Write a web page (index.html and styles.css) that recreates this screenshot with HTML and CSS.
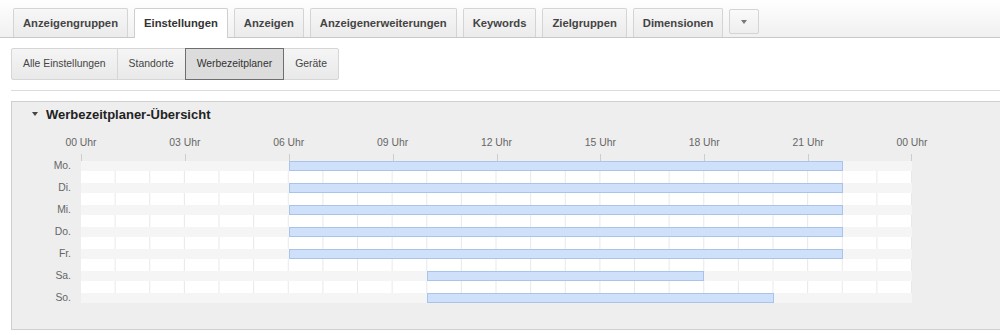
FILE: index.html
```html
<!DOCTYPE html>
<html lang="de">

<head>
  <meta charset="utf-8">
  <title>Werbezeitplaner</title>
  <link rel="stylesheet" href="styles.css">
</head>

<body>
  <div class="tabbar">
    <div class="tab">Anzeigengruppen</div>
    <div class="tab active">Einstellungen</div>
    <div class="tab">Anzeigen</div>
    <div class="tab">Anzeigenerweiterungen</div>
    <div class="tab">Keywords</div>
    <div class="tab">Zielgruppen</div>
    <div class="tab">Dimensionen</div>
    <div class="tab-more"><span class="caret"></span></div>
  </div>

  <div class="subtabs">
    <div class="subtab">Alle Einstellungen</div>
    <div class="subtab">Standorte</div>
    <div class="subtab active">Werbezeitplaner</div>
    <div class="subtab">Geräte</div>
  </div>

  <div class="divider"></div>

  <div class="panel">
    <div class="panel-title"><span class="toggle"></span>Werbezeitplaner-Übersicht</div>

    <div class="axis">
      <span>00 Uhr</span><span>03 Uhr</span><span>06 Uhr</span><span>09 Uhr</span><span>12 Uhr</span>
      <span>15 Uhr</span><span>18 Uhr</span><span>21 Uhr</span><span>00 Uhr</span>
    </div>
    <div class="ticks">
      <span></span><span></span><span></span><span></span><span></span><span></span><span></span><span></span>
    </div>

    <div class="schedule">
      <span class="day-label">Mo.</span>
      <div class="track"><div class="slot" style="left:25%;width:66.667%"></div></div>
      <div class="band"></div>

      <span class="day-label">Di.</span>
      <div class="track"><div class="slot" style="left:25%;width:66.667%"></div></div>
      <div class="band"></div>

      <span class="day-label">Mi.</span>
      <div class="track"><div class="slot" style="left:25%;width:66.667%"></div></div>
      <div class="band"></div>

      <span class="day-label">Do.</span>
      <div class="track"><div class="slot" style="left:25%;width:66.667%"></div></div>
      <div class="band"></div>

      <span class="day-label">Fr.</span>
      <div class="track"><div class="slot" style="left:25%;width:66.667%"></div></div>
      <div class="band"></div>

      <span class="day-label">Sa.</span>
      <div class="track"><div class="slot" style="left:41.667%;width:33.333%"></div></div>
      <div class="band"></div>

      <span class="day-label">So.</span>
      <div class="track"><div class="slot" style="left:41.667%;width:41.667%"></div></div>
    </div>
  </div>
</body>

</html>
```

FILE: styles.css
```css
body {
  font-family: 'Liberation Sans', Arial, sans-serif;
  background-color: #fff;
  margin: 0;
  overflow: hidden;
  color: #444;
}

/* top tabs */
.tabbar {
  display: flex;
  align-items: flex-start;
  gap: 6px;
  height: 37px;
  padding-left: 13px;
  border-bottom: 1px solid #c8c8c8;
  background: linear-gradient(#fff, #f0f0f0);
  box-sizing: content-box;
}

.tab {
  margin-top: 8px;
  height: 28px;
  padding: 0 9px;
  line-height: 28px;
  font-size: 11.25px;
  font-weight: bold;
  color: #444;
  background: linear-gradient(#f7f7f7, #ebebeb);
  border: 1px solid #d4d4d4;
  border-bottom: none;
  border-radius: 2px 2px 0 0;
  white-space: nowrap;
}

.tab.active {
  height: 29px;
  background: #fff;
  border-color: #cfcfcf;
  color: #333;
}

.tab-more {
  margin-top: 9px;
  width: 28px;
  height: 23px;
  display: flex;
  align-items: center;
  justify-content: center;
  border: 1px solid #d4d4d4;
  border-radius: 2px;
  background: linear-gradient(#fafafa, #eeeeee);
}

.caret {
  width: 0;
  height: 0;
  border-left: 3px solid transparent;
  border-right: 3px solid transparent;
  border-top: 4px solid #777;
}

/* sub tabs */
.subtabs {
  display: flex;
  margin: 10px 0 0 11px;
}

.subtab {
  height: 30px;
  line-height: 30px;
  padding: 0 11px;
  font-size: 10.4px;
  color: #444;
  background: linear-gradient(#f5f5f5, #e9e9e9);
  border: 1px solid #d6d6d6;
  margin-left: -1px;
}

.subtab:first-child {
  margin-left: 0;
  border-radius: 2px 0 0 2px;
}

.subtab:last-child {
  border-radius: 0 2px 2px 0;
}

.subtab.active {
  position: relative;
  background: #dcdcdc;
  border-color: #6e6e6e;
  color: #333;
}

.divider {
  margin: 10px 0 0 11px;
  height: 1px;
  background-color: #dcdcdc;
}

/* schedule panel */
.panel {
  margin: 10px -2px 0 11px;
  padding-bottom: 26px;
  background-color: #eeeeee;
  border: 1px solid #cfcfcf;
}

.panel-title {
  display: flex;
  align-items: center;
  height: 24px;
  padding-left: 20px;
  font-size: 13px;
  font-weight: bold;
  color: #222;
}

.toggle {
  width: 0;
  height: 0;
  margin-right: 8px;
  border-left: 3.5px solid transparent;
  border-right: 3.5px solid transparent;
  border-top: 4px solid #444;
}

.axis {
  display: flex;
  margin: 10px 0 0 17.06px;
  height: 14px;
  line-height: 14px;
}

.axis span {
  flex: 0 0 103.875px;
  text-align: center;
  font-size: 10.4px;
  color: #666;
}

.ticks {
  display: flex;
  margin: 4px 0 0 69px;
  height: 7px;
}

.ticks span {
  flex: 0 0 103.875px;
  box-sizing: border-box;
  border-left: 1px solid #cdcdcd;
}

.ticks span:last-child {
  border-right: 1px solid #cdcdcd;
}

.schedule {
  display: grid;
  grid-template-columns: 59px 831px;
  column-gap: 10px;
}

.day-label {
  text-align: right;
  font-size: 10.4px;
  line-height: 10px;
  color: #666;
}

.track {
  position: relative;
  height: 10px;
  background-color: #f5f5f5;
}

.slot {
  position: absolute;
  top: 0;
  bottom: 0;
  box-sizing: border-box;
  background-color: #cfe0fb;
  border: 1px solid #a9c3ea;
}

.band {
  grid-column: 2;
  height: 12px;
  background-color: #fff;
  background-image: linear-gradient(to right, transparent calc(100% - 1px), #e8e8e8 0);
  background-size: 34.625px 100%;
}
```
